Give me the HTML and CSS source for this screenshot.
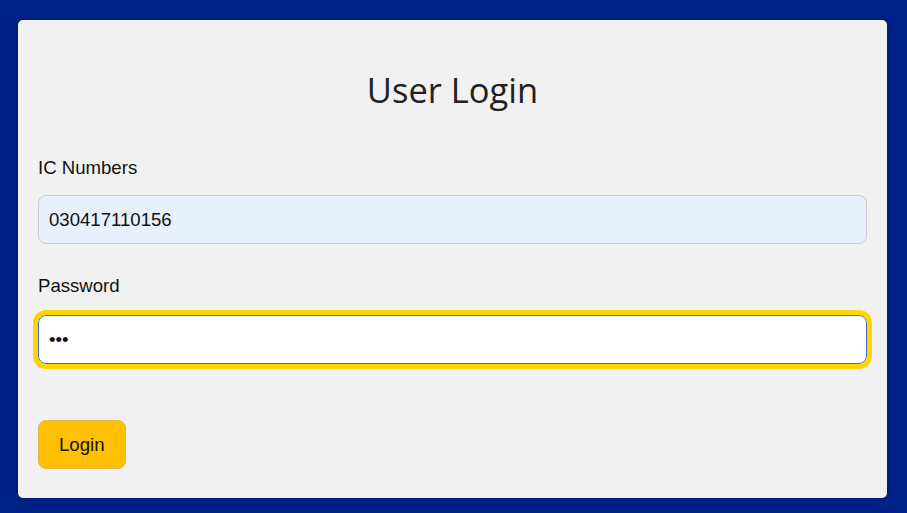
FILE: index.html
```html
<!DOCTYPE html>
<html lang="en">
<head>
<meta charset="utf-8">
<title>User Login</title>
<link rel="stylesheet" href="styles.css">
</head>
<body>
<div class="card">
  <h2 class="title">User Login</h2>
  <form class="form">
    <label class="label" for="ic">IC Numbers</label>
    <input class="input input-filled" id="ic" type="text" value="030417110156">
    <label class="label label-second" for="pw">Password</label>
    <input class="input input-focus" id="pw" type="password" value="123">
    <button class="btn" type="button">Login</button>
  </form>
</div>
</body>
</html>
```

FILE: styles.css
```css
html, body {
  margin: 0;
  padding: 0;
}
body {
  background: #002288;
  font-family: "Liberation Sans", Arial, sans-serif;
  color: #111;
  padding: 20px 20px 20px 18px;
}
.card {
  background: #f1f1f1;
  border-radius: 5px;
  padding: 28px 20px 29px 20px;
  box-shadow: 0 0 6px rgba(0, 0, 0, 0.25);
}
.title {
  margin: 20px 0 45px;
  text-align: center;
  font-family: "Open Sans", "Noto Sans", sans-serif;
  font-weight: 400;
  font-size: 34.5px;
  line-height: 44px;
  color: #222;
}
.form {
  display: flex;
  flex-direction: column;
  align-items: stretch;
}
.label {
  font-size: 18.6px;
  line-height: 22px;
  color: #111;
  margin-bottom: 16px;
}
.label-second {
  margin-top: 31px;
  margin-bottom: 18px;
}
.input {
  font-family: "Liberation Sans", Arial, sans-serif;
  font-size: 18.6px;
  line-height: 21px;
  padding: 13px 10px;
  border: 1px solid #c9c9d0;
  border-radius: 8px;
  background: #fff;
  color: #111;
  margin: 0;
}
.input-filled {
  background: #e8f0fe;
}
.input-focus {
  border-color: #3d6fd1;
  outline: 5px solid #ffd400;
  outline-offset: 0;
}
.btn {
  align-self: flex-start;
  margin-top: 56px;
  font-family: "Liberation Sans", Arial, sans-serif;
  font-size: 18.6px;
  line-height: 21px;
  padding: 13px 20px;
  background: #ffc000;
  border: 1px solid #e2b64a;
  border-radius: 8px;
  color: #111;
}
```
